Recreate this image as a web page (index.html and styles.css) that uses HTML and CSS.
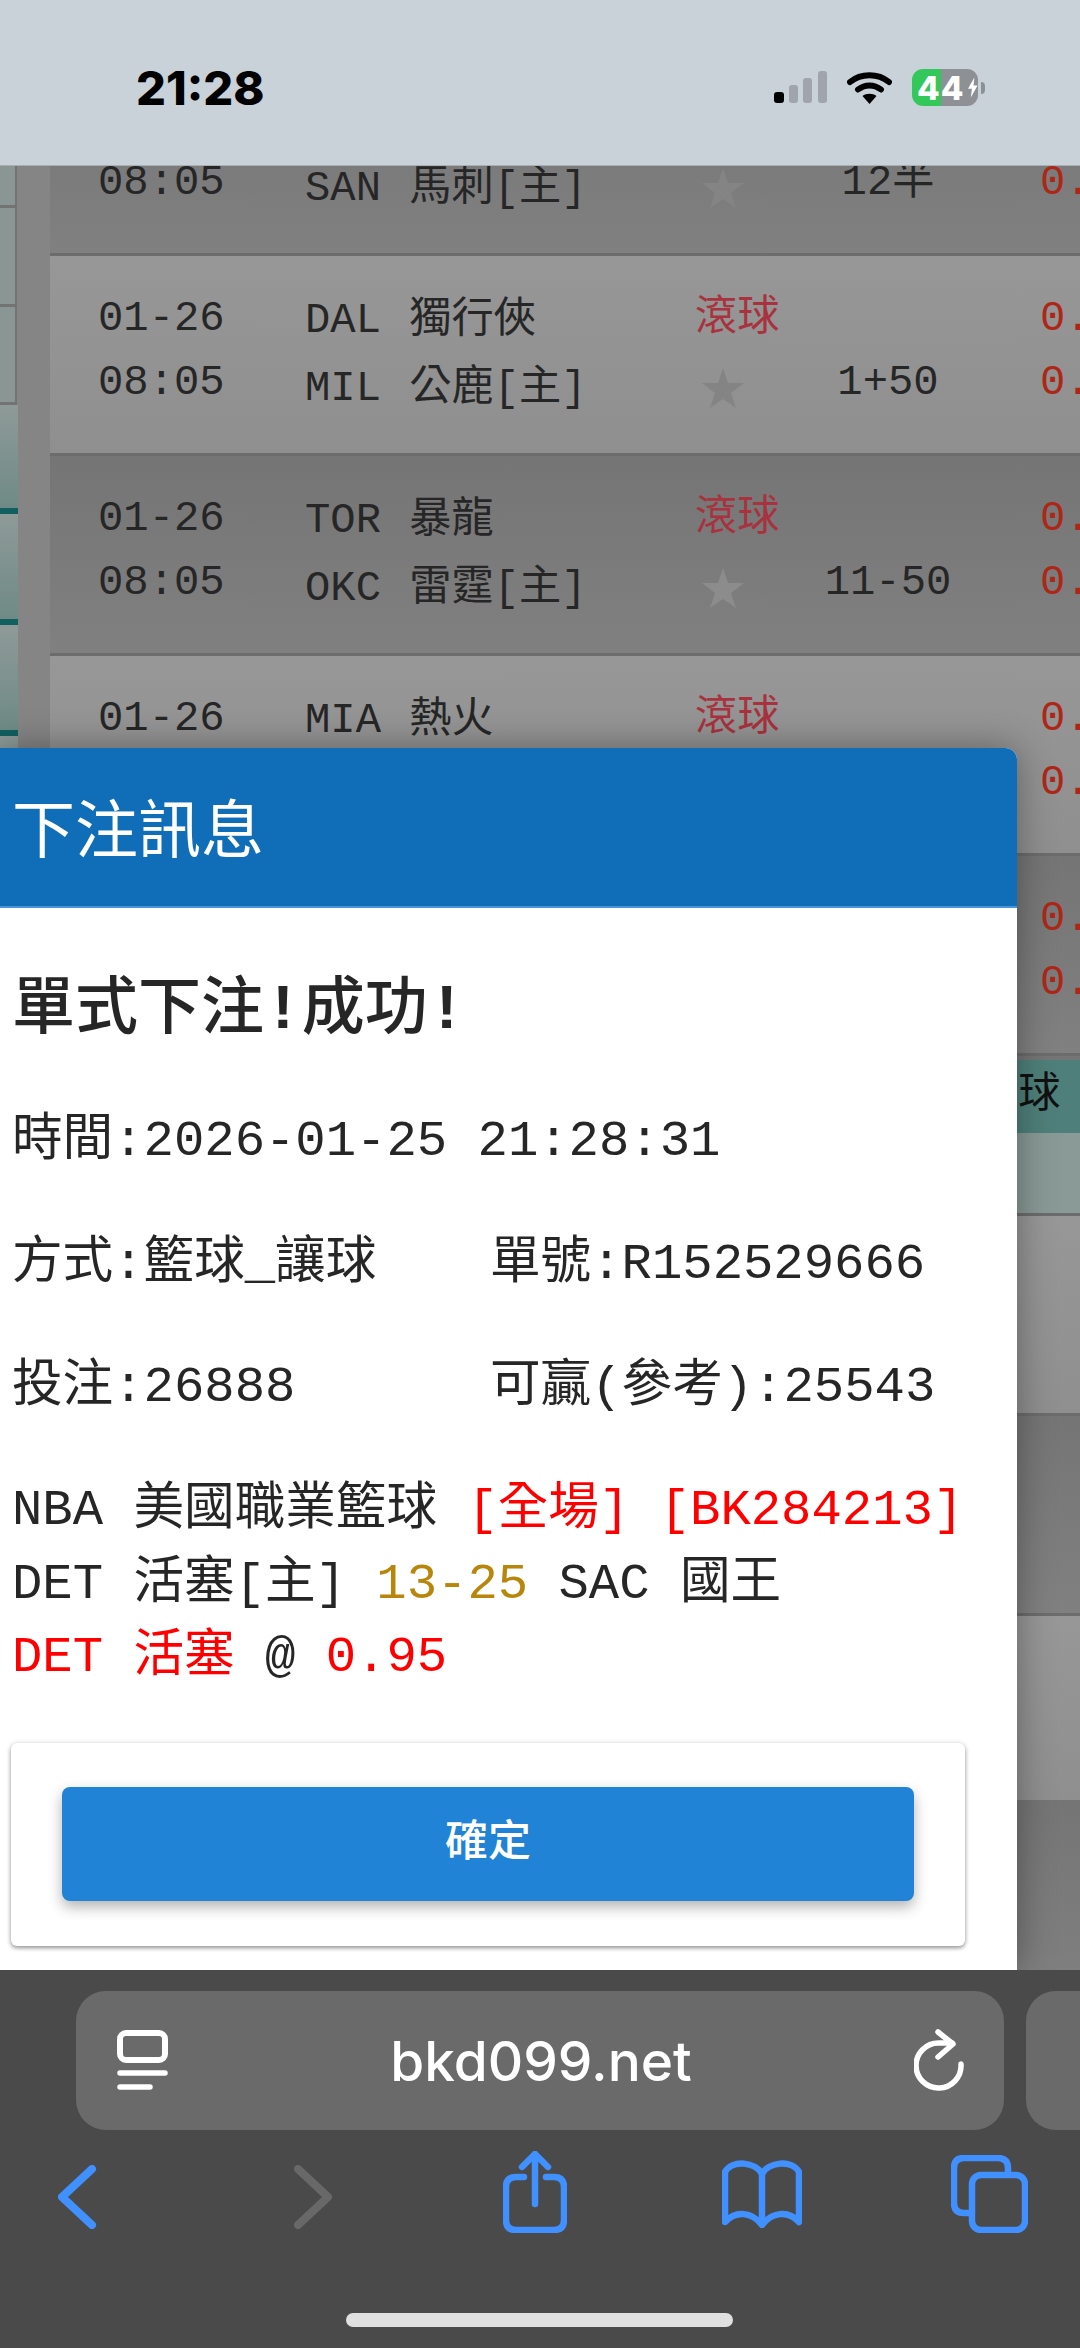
FILE: index.html
```html
<!DOCTYPE html>
<html lang="zh-Hant">
<head>
    <meta charset="UTF-8">
    <meta name="viewport" content="width=device-width, initial-scale=1.0">
    <title>下注訊息</title>
    <link rel="stylesheet" href="styles.css">
</head>
<body>
    <!-- Status bar -->
    <div class="status-bar">
        <span class="clock">21:28</span>
        <div class="status-icons">
            <svg class="signal" width="53" height="32" viewBox="0 0 53 32">
                <rect x="0" y="21" width="10" height="11" rx="3" fill="#000"/>
                <rect x="15" y="14" width="9" height="18" rx="3" fill="#9fa5ab"/>
                <rect x="29" y="7" width="9" height="25" rx="3" fill="#9fa5ab"/>
                <rect x="44" y="0" width="9" height="32" rx="3" fill="#9fa5ab"/>
            </svg>
            <svg class="wifi" width="45" height="33" viewBox="0 0 45 33">
                <path d="M3 11 C14 2 31 2 42 11" fill="none" stroke="#000" stroke-width="6" stroke-linecap="round"/>
                <path d="M11 18.500 C18 13 27 13 34 18.500" fill="none" stroke="#000" stroke-width="6" stroke-linecap="round"/>
                <path d="M15.500 25 C19 22 26 22 29.500 25 L22.500 33 Z" fill="#000"/>
            </svg>
            <div class="battery">
                <span class="battery-num">44</span>
                <svg width="12" height="25" viewBox="0 0 12 25"><path d="M8 0 L0 14 L5 14 L3.500 25 L12 10 L7 10 Z" fill="#fff"/></svg>
            </div>
            <div class="battery-nub"></div>
        </div>
    </div>

    <div class="page">
        <div class="side-strip">
            <div class="side-cell" style="height: 42px"></div>
            <div class="side-cell" style="height: 99px"></div>
            <div class="side-cell" style="height: 98px"></div>
            <div class="side-teal" style="height: 109px"></div>
            <div class="side-teal" style="height: 111px"></div>
            <div class="side-teal" style="height: 111px"></div>
            <div class="side-teal" style="height: 111px"></div>
        </div>

        <!-- Game list behind the dialog -->
        <div class="rows">
            <div class="row dark">
                <div class="line"></div>
                <div class="line">
                    <span class="date">08:05</span>
                    <span class="team home">SAN 馬刺[主]</span>
                    <svg class="star" viewBox="0 0 42 40"><path d="M21 0 L26 15 L42 15 L29 25 L34 40 L21 31 L8 40 L13 25 L0 15 L16 15 Z"/></svg>
                    <span class="spread">12半</span>
                    <span class="odds">0.</span>
                </div>
            </div>
            <div class="row light">
                <div class="line">
                    <span class="date">01-26</span>
                    <span class="team">DAL 獨行俠</span>
                    <span class="live">滾球</span>
                    <span class="spread"></span>
                    <span class="odds">0.</span>
                </div>
                <div class="line">
                    <span class="date">08:05</span>
                    <span class="team home">MIL 公鹿[主]</span>
                    <svg class="star" viewBox="0 0 42 40"><path d="M21 0 L26 15 L42 15 L29 25 L34 40 L21 31 L8 40 L13 25 L0 15 L16 15 Z"/></svg>
                    <span class="spread">1+50</span>
                    <span class="odds">0.</span>
                </div>
            </div>
            <div class="row dark">
                <div class="line">
                    <span class="date">01-26</span>
                    <span class="team">TOR 暴龍</span>
                    <span class="live">滾球</span>
                    <span class="spread"></span>
                    <span class="odds">0.</span>
                </div>
                <div class="line">
                    <span class="date">08:05</span>
                    <span class="team home">OKC 雷霆[主]</span>
                    <svg class="star pale" viewBox="0 0 42 40"><path d="M21 0 L26 15 L42 15 L29 25 L34 40 L21 31 L8 40 L13 25 L0 15 L16 15 Z"/></svg>
                    <span class="spread">11-50</span>
                    <span class="odds">0.</span>
                </div>
            </div>
            <div class="row light">
                <div class="line">
                    <span class="date">01-26</span>
                    <span class="team">MIA 熱火</span>
                    <span class="live">滾球</span>
                    <span class="spread"></span>
                    <span class="odds">0.</span>
                </div>
                <div class="line">
                    <span class="date"></span>
                    <span class="team"></span>
                    <span class="live"></span>
                    <span class="spread"></span>
                    <span class="odds">0.</span>
                </div>
            </div>
            <div class="row dark">
                <div class="line">
                    <span class="date"></span>
                    <span class="team"></span>
                    <span class="live"></span>
                    <span class="spread"></span>
                    <span class="odds">0.</span>
                </div>
                <div class="line">
                    <span class="date"></span>
                    <span class="team"></span>
                    <span class="live"></span>
                    <span class="spread"></span>
                    <span class="odds">0.</span>
                </div>
            </div>
            <div class="league">
                <div class="league-title">籃球</div>
                <div class="league-rest"></div>
            </div>
            <div class="row light"></div>
            <div class="row dark"></div>
            <div class="row light short"></div>
            <div class="row dark"></div>
        </div>

        <!-- Bet result dialog -->
        <div class="dialog">
            <div class="dialog-header">下注訊息</div>
            <div class="dialog-body">
                <div class="result-title">單式下注<b>!</b>成功<b>!</b></div>
                <div class="info">時間:2026-01-25 21:28:31</div>
                <div class="info info-grid">
                    <span>方式:籃球_讓球</span>
                    <span>單號:R152529666</span>
                </div>
                <div class="info info-grid">
                    <span>投注:26888</span>
                    <span>可贏(參考):25543</span>
                </div>
                <div class="detail">
                    <div>NBA 美國職業籃球 <span class="red">[全場]</span> <span class="red">[BK284213]</span></div>
                    <div>DET 活塞[主] <span class="gold">13-25</span> SAC 國王</div>
                    <div><span class="red">DET 活塞</span> @ <span class="red">0.95</span></div>
                </div>
                <div class="action-card">
                    <button class="confirm">確定</button>
                </div>
            </div>
        </div>
    </div>

    <!-- Safari toolbar -->
    <div class="safari">
        <div class="url-row">
            <div class="url-pill">
                <svg width="51" height="62" viewBox="0 0 51 62" fill="none" stroke="#fff" stroke-linecap="round">
                    <rect x="3" y="3" width="45" height="27" rx="6" stroke-width="6"/>
                    <path d="M3 43 H48 M3 57 H33" stroke-width="5.500"/>
                </svg>
                <span class="url-text">bkd099.net</span>
                <svg width="52" height="64" viewBox="0 0 52 64" fill="none" stroke="#fff" stroke-width="5.500" stroke-linecap="round" stroke-linejoin="round">
                    <path d="M47 35 A22.500 22.500 0 1 1 25 14 L38 14"/>
                    <path d="M24 3 L39 15 L24 28"/>
                </svg>
            </div>
            <div class="next-pill"></div>
        </div>
        <div class="tool-row">
            <svg class="tool-back" width="42" height="64" viewBox="0 0 42 64" fill="none" stroke="#4090ff" stroke-width="8" stroke-linecap="round" stroke-linejoin="round"><path d="M34 4 L4 32 L34 60"/></svg>
            <svg class="tool-forward" width="42" height="64" viewBox="0 0 42 64" fill="none" stroke="#686868" stroke-width="8" stroke-linecap="round" stroke-linejoin="round"><path d="M4 4 L34 32 L4 60"/></svg>
            <svg class="tool-share" width="64" height="82" viewBox="0 0 64 82" fill="none" stroke="#4090ff" stroke-width="6.500" stroke-linecap="round" stroke-linejoin="round">
                <path d="M21 26 H13 Q3 26 3 36 V69 Q3 79 13 79 H51 Q61 79 61 69 V36 Q61 26 51 26 H43"/>
                <path d="M32 53 V3 M19 16 L32 3 L45 16"/>
            </svg>
            <svg class="tool-book" width="80" height="68" viewBox="0 0 80 68" fill="none" stroke="#4090ff" stroke-width="6.500" stroke-linecap="round" stroke-linejoin="round">
                <path d="M40 14 C34 2 10 -1 3 12 V62 C14 50 30 52 40 65 C50 52 66 50 77 62 V12 C70 -1 46 2 40 14 Z M40 14 V64"/>
            </svg>
            <svg class="tool-tabs" width="77" height="78" viewBox="0 0 77 78" fill="none" stroke="#4090ff" stroke-width="6.500" stroke-linejoin="round">
                <path d="M18 58 H13 Q3 58 3 48 V13 Q3 3 13 3 H47 Q57 3 57 13 V20"/>
                <rect x="21" y="20" width="53" height="55" rx="9"/>
            </svg>
        </div>
        <div class="home-bar"></div>
    </div>
</body>
</html>
```

FILE: styles.css
```css
body {
    margin: 0;
    width: 1080px;
    height: 2348px;
    overflow: hidden;
    display: flex;
    flex-direction: column;
    font-family: "Liberation Mono", "Noto Sans CJK TC", monospace;
    color: #262626;
    background-color: #4a4a4a;
}

/* Status bar */
.status-bar {
    height: 166px;
    flex: none;
    box-sizing: border-box;
    border-bottom: 1px solid #a9aeb3;
    padding: 69px 95px 0 136px;
    background-color: #c9d1d9;
    display: flex;
    justify-content: space-between;
    align-items: flex-start;
    z-index: 2;
}

.clock {
    font-family: Inter, sans-serif;
    font-weight: 800;
    font-size: 47px;
    line-height: 38px;
    color: #000;
}

.status-icons {
    display: flex;
    align-items: flex-start;
}

.signal {
    margin: 2px 20px 0 0;
}

.wifi {
    margin: 2px 20px 0 0;
}

.battery {
    width: 66px;
    height: 37px;
    box-sizing: border-box;
    border-radius: 11px;
    padding-left: 5px;
    background: linear-gradient(to right, #34c75a 29px, #8d9095 29px);
    display: flex;
    align-items: center;
    gap: 4px;
}

.battery-num {
    font-family: Inter, sans-serif;
    font-weight: 800;
    font-size: 33px;
    letter-spacing: 1px;
    color: #fff;
}

.battery-nub {
    width: 4px;
    height: 12px;
    margin: 13px 0 0 3px;
    border-radius: 0 4px 4px 0;
    background-color: #8d9095;
}

/* Page behind the dialog */
.page {
    flex: 1;
    position: relative;
    overflow: hidden;
    display: flex;
    background-color: #858585;
}

.side-strip {
    width: 18px;
    margin-right: 32px;
    flex: none;
}

.side-cell {
    box-sizing: border-box;
    width: 17px;
    border-right: 2px solid #737373;
    border-bottom: 3px solid #737373;
    background-color: #8a9694;
}

.side-teal {
    box-sizing: border-box;
    border-bottom: 6px solid #125f60;
    background: linear-gradient(#8e9a98, #6f8a86);
}

.rows {
    flex: 1;
    min-width: 0;
    margin-top: -110px;
}

.row {
    box-sizing: border-box;
    height: 200px;
    padding: 29px 0 0 48px;
    border-bottom: 3px solid #6c6c6c;
}

.row.dark {
    background: linear-gradient(#757575, #808080);
}

.row.light {
    background: linear-gradient(#979797, #8f8f8f);
}

.row.short {
    height: 184px;
    border-bottom: none;
}

.line {
    height: 64px;
    display: grid;
    grid-template-columns: 207px 390px 100px 186px 1fr;
    font-size: 42.200px;
    line-height: 68px;
    white-space: nowrap;
}

.team {
    line-height: 73px;
    word-spacing: 3px;
}

.team.home {
    line-height: 80px;
}

.live {
    line-height: 68px;
    color: #a8323e;
}

.star {
    width: 42px;
    height: 40px;
    margin: 19px 0 0 7px;
    fill: #848484;
}

.star.pale {
    fill: #8c8c8c;
}

.spread {
    text-align: center;
}

.odds {
    padding-left: 59px;
    color: #ad2717;
}

.league {
    height: 160px;
    box-sizing: border-box;
    padding-top: 4px;
    border-bottom: 3px solid #6c6c6c;
    background-color: #757575;
}

.league-title {
    height: 73px;
    padding-left: 926px;
    font-size: 42.200px;
    line-height: 73px;
    white-space: nowrap;
    color: #111;
    background-color: #4f7f7a;
}

.league-rest {
    height: 80px;
    background: linear-gradient(to right, #6f7d7a, #8a9a96);
}

/* Dialog */
.dialog {
    position: absolute;
    left: 0;
    top: 582px;
    bottom: 0;
    width: 1017px;
    border-radius: 0 12px 0 0;
    background-color: #fff;
    box-shadow: 0 0 36px rgba(0, 0, 0, 0.35);
}

.dialog-header {
    height: 158px;
    padding-left: 12px;
    border-radius: 0 12px 0 0;
    border-bottom: 2px solid #4a94dc;
    background-color: #106eb8;
    font-family: "Noto Sans CJK TC", sans-serif;
    font-weight: 400;
    font-size: 63px;
    line-height: 153px;
    color: #fff;
}

.dialog-body {
    padding: 67px 0 0 12px;
}

.result-title {
    font-size: 63px;
    font-weight: 500;
    line-height: 74px;
    margin-bottom: 63px;
}

.info {
    height: 60px;
    margin-bottom: 63px;
    font-size: 50.600px;
    line-height: 60px;
    white-space: nowrap;
}

.info-grid {
    display: grid;
    grid-template-columns: 478px 1fr;
}

.detail {
    margin-top: -7px;
    font-size: 50.600px;
    line-height: 73.500px;
    white-space: nowrap;
}

.red {
    color: #ff0000;
}

.gold {
    color: #b8860b;
}

.action-card {
    width: 954px;
    height: 203px;
    box-sizing: border-box;
    margin: 48px 0 0 -1px;
    padding: 44px 51px;
    border-radius: 6px;
    background-color: #fff;
    box-shadow: 0 2px 4px rgba(0, 0, 0, 0.4), 0 0 6px rgba(0, 0, 0, 0.08);
}

.confirm {
    display: block;
    width: 100%;
    height: 114px;
    padding: 0 0 14px;
    border: none;
    border-radius: 8px;
    background-color: #2083d6;
    box-shadow: 0 6px 14px rgba(0, 0, 0, 0.3);
    font-family: Roboto, "Noto Sans CJK TC", sans-serif;
    font-weight: 500;
    font-size: 43px;
    color: #fff;
}

/* Safari toolbar */
.safari {
    height: 378px;
    flex: none;
    box-sizing: border-box;
    padding-top: 21px;
    background-color: #4a4a4a;
    z-index: 2;
}

.url-row {
    display: flex;
    gap: 22px;
    padding-left: 76px;
}

.url-pill {
    width: 928px;
    height: 139px;
    flex: none;
    box-sizing: border-box;
    padding: 0 38px 0 41px;
    border-radius: 30px;
    background-color: #6a6a6a;
    display: flex;
    justify-content: space-between;
    align-items: center;
}

.next-pill {
    flex: 1;
    height: 139px;
    border-radius: 30px 0 0 30px;
    background-color: #6a6a6a;
}

.url-text {
    font-family: Inter, sans-serif;
    font-weight: 500;
    font-size: 55px;
    color: #fff;
}

.tool-row {
    height: 90px;
    margin-top: 20px;
    padding-left: 58px;
    display: flex;
    align-items: flex-start;
}

.tool-back {
    margin: 15px 194px 0 0;
}

.tool-forward {
    margin: 15px 167px 0 0;
}

.tool-share {
    margin: 1px 155px 0 0;
}

.tool-book {
    margin: 10px 149px 0 0;
}

.tool-tabs {
    margin: 5px 0 0 0;
}

.home-bar {
    width: 387px;
    height: 14px;
    margin: 73px 0 0 346px;
    border-radius: 7px;
    background-color: #e0e0e0;
}
```
